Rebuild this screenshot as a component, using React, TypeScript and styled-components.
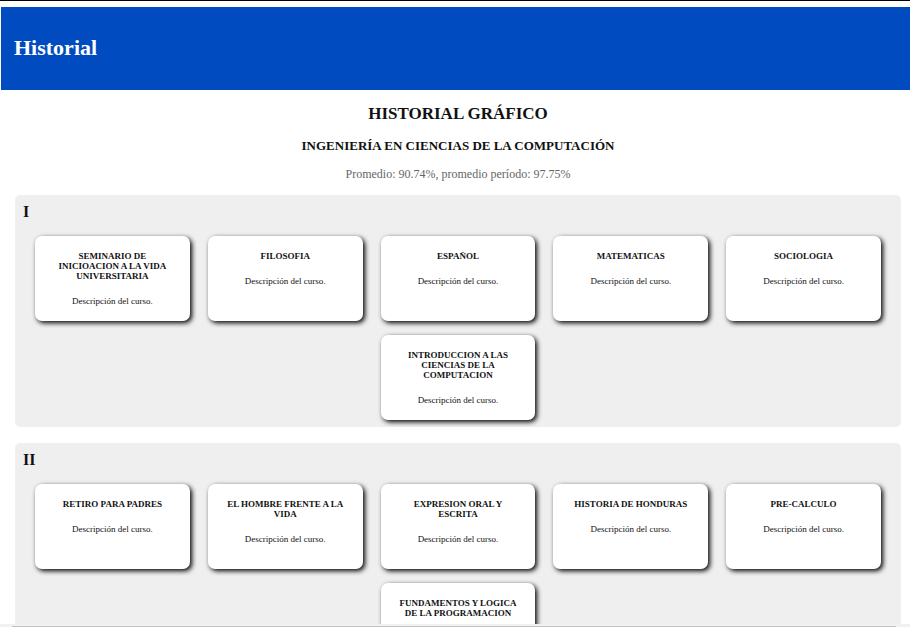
import React from "react";
import styled, { createGlobalStyle } from "styled-components";

const GlobalStyle = createGlobalStyle`
  * {
    box-sizing: border-box;
  }
  body {
    margin: 0;
    background: #ffffff;
    color: #111111;
    font-family: "Liberation Serif", "Times New Roman", serif;
  }
  h1, h2, h3, h4, p {
    margin: 0;
  }
`;

const Page = styled.div`
  height: 100vh;
  display: flex;
  flex-direction: column;
  border-top: 1px solid #000000;
  padding-top: 6px;
  overflow: hidden;
`;

const Header = styled.header`
  flex: none;
  margin-left: 1px;
  padding: 28px 13px 29px;
  background: #004bbf;
  color: #ffffff;
`;

const PageTitle = styled.h1`
  font-size: 22px;
  line-height: 26px;
`;

const Content = styled.main`
  flex: 1;
  min-height: 0;
  overflow: hidden;
  padding: 14px 9px 0 15px;
`;

const Intro = styled.div`
  display: flex;
  flex-direction: column;
  align-items: center;
  text-align: center;
  margin-bottom: 13px;
`;

const Heading = styled.h2`
  font-size: 17px;
  line-height: 20px;
`;

const Career = styled.h3`
  margin-top: 14px;
  font-size: 13px;
  line-height: 16px;
`;

const Average = styled.p`
  margin-top: 12px;
  font-size: 12px;
  line-height: 16px;
  color: #666666;
`;

const Period = styled.section`
  margin-bottom: 16px;
  padding: 7px 8px;
  border-radius: 5px;
  background: #efefef;
`;

const PeriodTitle = styled.h3`
  font-size: 16px;
  line-height: 20px;
`;

const Courses = styled.div`
  display: flex;
  flex-wrap: wrap;
  justify-content: center;
  gap: 14px 18px;
  margin-top: 14px;
  padding: 0 12px;
`;

const CourseCard = styled.article`
  flex: 0 0 calc((100% - 72px) / 5);
  min-height: 85px;
  padding: 15px 16px;
  border-radius: 7px;
  background: #ffffff;
  box-shadow: 2px 2px 5px #000000;
  text-align: center;
  font-size: 9px;
  line-height: 10px;
`;

const CourseName = styled.h4`
  margin-bottom: 15px;
  font-size: 9px;
`;

const ScrollTrack = styled.div`
  flex: none;
  height: 3px;
  padding: 2px 14px 0 12px;
  background: #f1f1f1;
`;

const ScrollThumb = styled.div`
  height: 1px;
  background: #c1c1c1;
`;

const periods = [
  {
    name: "I",
    courses: [
      "SEMINARIO DE INICIOACION A LA VIDA UNIVERSITARIA",
      "FILOSOFIA",
      "ESPAÑOL",
      "MATEMATICAS",
      "SOCIOLOGIA",
      "INTRODUCCION A LAS CIENCIAS DE LA COMPUTACION",
    ],
  },
  {
    name: "II",
    courses: [
      "RETIRO PARA PADRES",
      "EL HOMBRE FRENTE A LA VIDA",
      "EXPRESION ORAL Y ESCRITA",
      "HISTORIA DE HONDURAS",
      "PRE-CALCULO",
      "FUNDAMENTOS Y LOGICA DE LA PROGRAMACION",
    ],
  },
];

export default function App() {
  return (
    <>
      <GlobalStyle />
      <Page>
        <Header>
          <PageTitle>Historial</PageTitle>
        </Header>
        <Content>
          <Intro>
            <Heading>HISTORIAL GRÁFICO</Heading>
            <Career>INGENIERÍA EN CIENCIAS DE LA COMPUTACIÓN</Career>
            <Average>Promedio: 90.74%, promedio período: 97.75%</Average>
          </Intro>
          {periods.map((period) => (
            <Period key={period.name}>
              <PeriodTitle>{period.name}</PeriodTitle>
              <Courses>
                {period.courses.map((course) => (
                  <CourseCard key={course}>
                    <CourseName>{course}</CourseName>
                    <p>Descripción del curso.</p>
                  </CourseCard>
                ))}
              </Courses>
            </Period>
          ))}
        </Content>
        <ScrollTrack aria-hidden="true">
          <ScrollThumb />
        </ScrollTrack>
      </Page>
    </>
  );
}
